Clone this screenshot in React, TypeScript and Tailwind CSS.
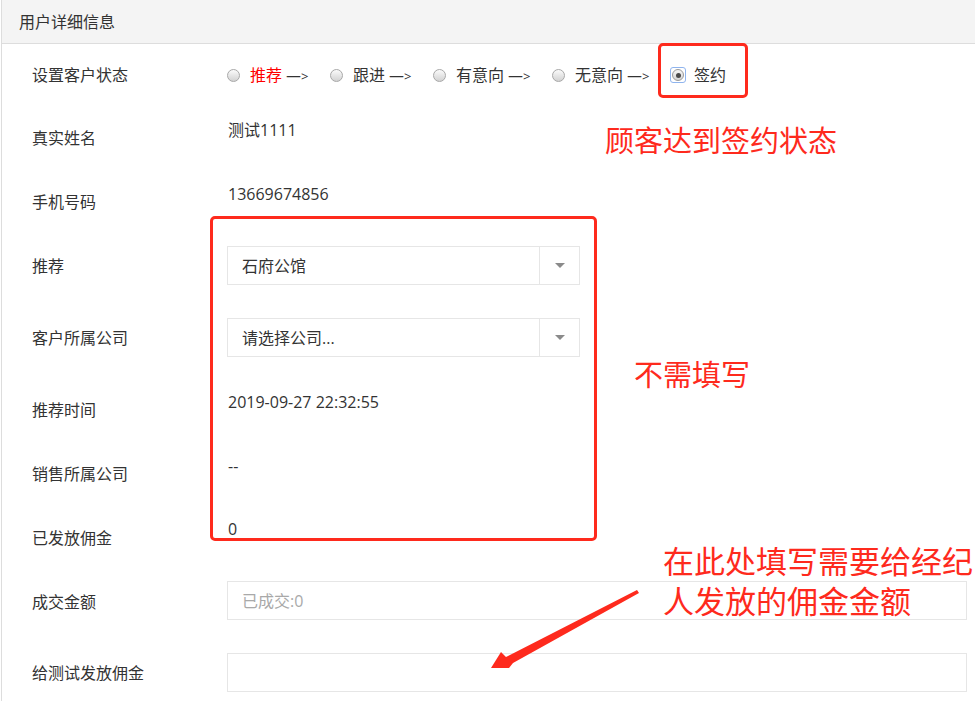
import React from "react";

const FONT = { fontFamily: '"Open Sans", "Noto Sans CJK SC", sans-serif' };
const CJK = { fontFamily: '"Noto Sans CJK SC", sans-serif' };
const DASH = { fontFamily: '"DejaVu Sans", sans-serif' };

function Radio({ checked }: { checked?: boolean }) {
  if (checked) {
    return (
      <span className="inline-flex items-center justify-center w-[16px] h-[16px] rounded-[3px] border border-[#8fb4ee] shrink-0">
        <span className="flex items-center justify-center w-[12px] h-[12px] rounded-full border border-[#9a9a9a] bg-linear-to-b from-[#f6f6f6] to-[#d4d4d4]">
          <span className="w-[5px] h-[5px] rounded-full bg-[#4a4a4a]" />
        </span>
      </span>
    );
  }
  return (
    <span className="inline-block w-[13px] h-[13px] rounded-full border border-[#a8a8a8] bg-linear-to-b from-[#fbfbfb] to-[#d2d2d2] shrink-0" />
  );
}

function Label({ children }: { children: React.ReactNode }) {
  return (
    <div className="w-[225px] shrink-0 pl-[30px] pt-[22px] text-[16px] leading-[20px] text-[#333]">
      {children}
    </div>
  );
}

function Select({ text }: { text: string }) {
  return (
    <div className="flex w-[353px] h-[39px] border border-[#e6e6e6] bg-white">
      <div className="flex-1 flex items-center pl-[14px] text-[16px] text-[#333]">{text}</div>
      <div className="w-[40px] border-l border-[#e6e6e6] flex items-center justify-center">
        <span className="w-0 h-0 border-l-[5px] border-r-[5px] border-t-[5px] border-l-transparent border-r-transparent border-t-[#8a8a8a]" />
      </div>
    </div>
  );
}

function Input({ placeholder }: { placeholder?: string }) {
  return (
    <div className="flex items-center w-[740px] h-[39px] border border-[#e6e6e6] pl-[14px] text-[16px] text-[#a9a9a9]">
      {placeholder}
    </div>
  );
}

const steps = [
  { t: "推荐", red: true, w: "w-[32px]" },
  { t: "跟进", w: "w-[32px]" },
  { t: "有意向", w: "w-[48px]" },
  { t: "无意向", w: "w-[48px]" },
];

export default function App() {
  return (
    <div className="relative w-[975px] h-[701px] overflow-hidden bg-white" style={FONT}>
      <div className="ml-[1px] border-l border-[#dddddd] h-full">
        <div className="h-[44px] bg-[#f4f4f4] border-b border-[#dddddd] pl-[17px] flex items-center text-[16px] text-[#333]">
          用户详细信息
        </div>

        {/* Row 1 status */}
        <div className="flex h-[62px]">
          <div className="w-[225px] shrink-0 pl-[30px] pt-[21px] text-[16px] leading-[20px] text-[#333]">设置客户状态</div>
          <div className="flex items-center h-[20px] mt-[21px] text-[16px] leading-[20px] text-[#333]">
            {steps.map((s, i) => (
              <div key={i} className="flex items-center mr-[16px] shrink-0">
                <Radio />
                <span className={"ml-[10px] shrink-0 whitespace-nowrap " + s.w + " " + (s.red ? "text-[#ff0000]" : "")}>{s.t}</span>
                <span className="ml-[4px] w-[28px] shrink-0 whitespace-nowrap text-[#333]">
                  <span className="text-[15px]" style={DASH}>—</span>
                  <span className="text-[13px]">&gt;</span>
                </span>
              </div>
            ))}
            <div className="flex items-center -ml-[1px] shrink-0">
              <Radio checked />
              <span className="ml-[8px]">签约</span>
            </div>
          </div>
        </div>

        <div className="flex h-[64px]">
          <Label>真实姓名</Label>
          <div className="pt-[14px] pl-[1px] text-[16px] leading-[20px] text-[#333]">测试1111</div>
        </div>
        <div className="flex h-[64px]">
          <Label>手机号码</Label>
          <div className="pt-[14px] pl-[1px] text-[16px] leading-[20px] text-[#333]">13669674856</div>
        </div>
        <div className="flex h-[72px]">
          <Label>推荐</Label>
          <div className="pt-[12px]">
            <Select text="石府公馆" />
          </div>
        </div>
        <div className="flex h-[72px]">
          <Label>客户所属公司</Label>
          <div className="pt-[12px]">
            <Select text="请选择公司..." />
          </div>
        </div>
        <div className="flex h-[64px]">
          <Label>推荐时间</Label>
          <div className="pt-[14px] pl-[1px] text-[16px] leading-[20px] text-[#333]">2019-09-27 22:32:55</div>
        </div>
        <div className="flex h-[64px]">
          <Label>销售所属公司</Label>
          <div className="pt-[14px] pl-[1px] text-[16px] leading-[20px] text-[#333]">--</div>
        </div>
        <div className="flex h-[64px]">
          <Label>已发放佣金</Label>
          <div className="pt-[13px] pl-[1px] text-[16px] leading-[20px] text-[#333]">0</div>
        </div>
        <div className="flex h-[71px]">
          <Label>成交金额</Label>
          <div className="pt-[11px]">
            <Input placeholder="已成交:0" />
          </div>
        </div>
        <div className="flex h-[71px]">
          <Label>给测试发放佣金</Label>
          <div className="pt-[12px]">
            <Input />
          </div>
        </div>
      </div>

      {/* Annotations */}
      <div className="absolute left-[658px] top-[43px] w-[90px] h-[55px] border-[3px] border-[#fe2a1d] rounded-[5px]" />
      <div className="absolute left-[605px] top-[119px] text-[29px] leading-[40px] text-[#fe2a1d] whitespace-nowrap" style={CJK}>
        顾客达到签约状态
      </div>
      <div className="absolute left-[210px] top-[216px] w-[387px] h-[325px] border-[3px] border-[#fe2a1d] rounded-[5px]" />
      <div className="absolute left-[634px] top-[353px] text-[29px] leading-[40px] text-[#fe2a1d] whitespace-nowrap" style={CJK}>
        不需填写
      </div>
      <div className="absolute left-[663px] top-[540px] text-[31px] leading-[40px] text-[#fe2a1d] whitespace-nowrap" style={CJK}>
        在此处填写需要给经纪
        <br />
        人发放的佣金金额
      </div>
      <svg className="absolute left-0 top-0 pointer-events-none" width="975" height="701" viewBox="0 0 975 701">
        <polygon
          points="491,668 501,652 506,657 637,590 639,593 513,663 509,668"
          fill="#fe2a1d"
        />
      </svg>
    </div>
  );
}
